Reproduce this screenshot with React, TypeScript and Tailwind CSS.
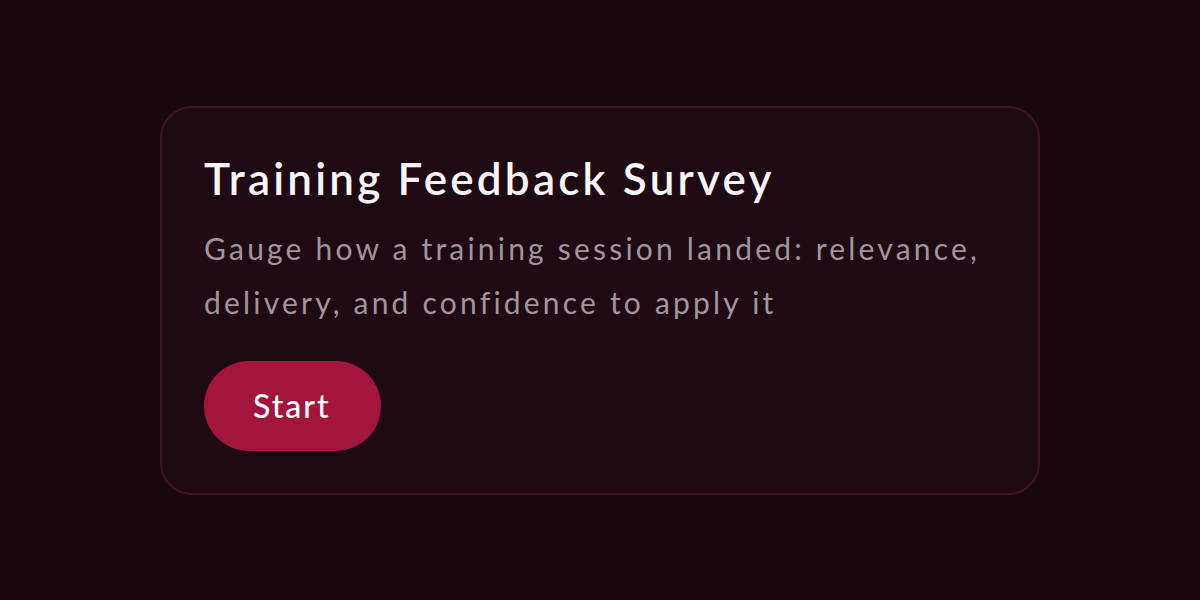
export default function App() {
  return (
    <div className="min-h-screen w-full bg-[#180910] flex items-center justify-center" style={{ fontFamily: 'Lato, "Noto Sans", sans-serif' }}>
      <div className="w-[880px] rounded-[32px] border-2 border-[#3d1527] bg-[#1e0a13] px-[42px] pt-[42px] pb-[42px]">
        <h1 className="text-[44px] leading-[56px] font-semibold text-[#f8f6f8] tracking-[3.2px]">Training Feedback Survey</h1>
        <p className="mt-[15px] text-[30px] leading-[54px] text-[#a0959c] tracking-[3.2px]">
          Gauge how a training session landed: relevance, delivery, and confidence to apply it
        </p>
        <button className="mt-8 h-[90px] pl-[49px] pr-[50px] rounded-full bg-[#a3153d] text-[32px] font-medium text-white tracking-[2px]">
          Start
        </button>
      </div>
    </div>
  );
}
